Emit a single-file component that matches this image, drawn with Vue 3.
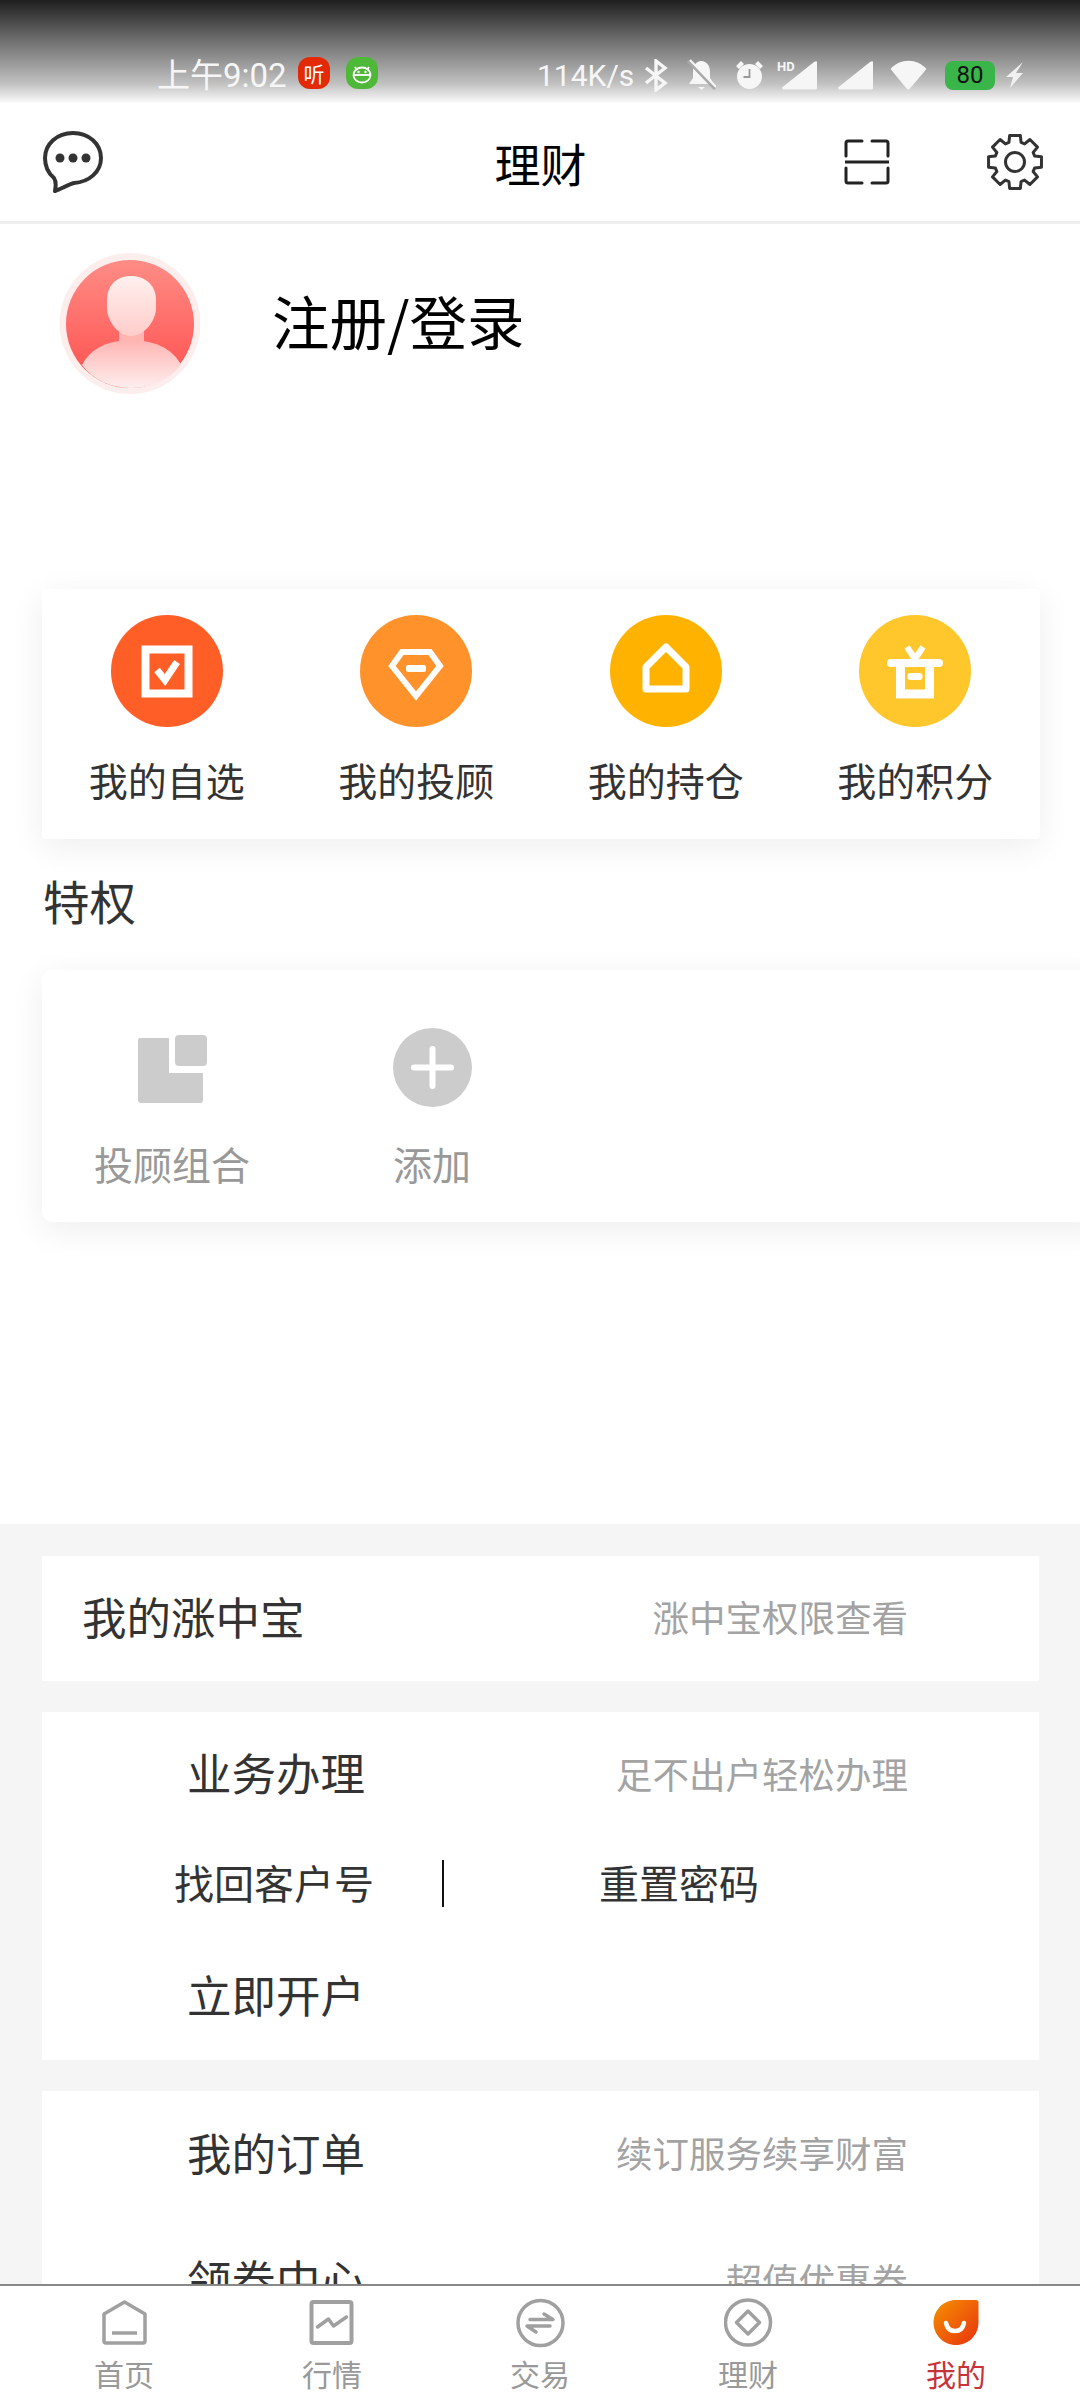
<script setup>
const quick = [
  { label: '我的自选', color: '#ff5e27', icon: 'check' },
  { label: '我的投顾', color: '#ff922b', icon: 'gem' },
  { label: '我的持仓', color: '#ffb300', icon: 'house' },
  { label: '我的积分', color: '#ffc72c', icon: 'gift' }
]
const tabs = [
  { label: '首页', icon: 'home' },
  { label: '行情', icon: 'chart' },
  { label: '交易', icon: 'trade' },
  { label: '理财', icon: 'money' },
  { label: '我的', icon: 'me', active: true }
]

// 8齿齿轮轮廓
function gearPath(cx, cy, outer, inner) {
  const pts = []
  for (let i = 0; i < 8; i++) {
    const a = (i * Math.PI) / 4 - Math.PI / 2
    for (const [r, d] of [[inner, -0.3], [outer, -0.2], [outer, 0.2], [inner, 0.3]]) {
      pts.push(`${(cx + r * Math.cos(a + d)).toFixed(2)} ${(cy + r * Math.sin(a + d)).toFixed(2)}`)
    }
  }
  return 'M' + pts.join('L') + 'Z'
}
const gear = gearPath(29, 29, 27, 20.5)
</script>

<template>
  <div class="page">
    <!-- 状态栏 -->
    <div class="status">
      <div class="status-left">
        <span class="time">上午9:02</span>
        <span class="app-badge red">听</span>
        <span class="app-badge green">
          <svg width="24" height="24" viewBox="0 0 24 24" fill="none" stroke="#fff" stroke-width="1.8">
            <path d="M5 6l2 3M19 6l-2 3" />
            <ellipse cx="12" cy="14" rx="8.5" ry="7.5" />
            <path d="M3.5 14h17" />
            <path d="M8.5 11h.01M15.5 11h.01" stroke-width="2.4" stroke-linecap="round" />
          </svg>
        </span>
      </div>
      <div class="status-right">
        <span class="speed">114K/s</span>
        <svg class="s-bt" width="24" height="33" viewBox="0 0 24 33" fill="none" stroke="#f6f6f6" stroke-width="3.4">
          <path d="M2 9l19 15-9 7V2l9 7L2 24" />
        </svg>
        <svg class="s-bell" width="29" height="33" viewBox="0 0 29 33" fill="#f6f6f6">
          <path d="M14 2c6 0 9 5 9 11v6l4 6H2l4-6v-6c0-6 3-11 8-11z" />
          <path d="M11 28h7l-3.500 3z" />
          <path d="M1 2l27 28" stroke="#a9a9a9" stroke-width="3" />
          <path d="M3 1l26 27" stroke="#f6f6f6" stroke-width="2" />
        </svg>
        <svg class="s-clock" width="29" height="30" viewBox="0 0 29 30">
          <circle cx="14.500" cy="16.500" r="12.500" fill="#f6f6f6" />
          <path d="M1 6l5-5 3 3-5 5zM28 6l-5-5-3 3 5 5z" fill="#f6f6f6" />
          <path d="M14.500 9v8h-6" fill="none" stroke="#999" stroke-width="1.800" />
        </svg>
        <span class="s-hd">
          <span class="hd-text">HD</span>
          <svg width="36" height="29" viewBox="0 0 36 29">
            <path d="M35 1v26a1.500 1.500 0 0 1-1.500 1.500H2c-2 0-2.500-1.500-1-2.800L32 1c1.500-1 3-1 3 0z" fill="#f6f6f6" />
          </svg>
        </span>
        <svg class="s-sig" width="36" height="29" viewBox="0 0 36 29">
          <path d="M35 1v26a1.500 1.500 0 0 1-1.500 1.500H2c-2 0-2.500-1.500-1-2.800L32 1c1.500-1 3-1 3 0z" fill="#f6f6f6" />
        </svg>
        <svg class="s-wifi" width="37" height="30" viewBox="0 0 37 30">
          <path d="M0.500 9C10 -2 27 -2 36.500 9L20 28.500c-1 1.300-2.500 1.300-3.500 0z" fill="#f6f6f6" />
        </svg>
        <span class="battery">80</span>
        <svg class="s-bolt" width="19" height="28" viewBox="0 0 19 28">
          <path d="M18 1L1 16h7l-3 11 13-15h-7z" fill="#f0f0f0" />
        </svg>
      </div>
    </div>

    <!-- 顶部栏 -->
    <header class="topbar">
      <svg class="msg" width="60" height="62" viewBox="0 0 60 62" fill="none">
        <path d="M30 2C46 2 58 13 58 27C58 41 46 51 31 52C26 53 18 58 12 60C13 55 13 50 11 47C5 42 2 35 2 27C2 13 14 2 30 2Z" stroke="#333" stroke-width="4" stroke-linejoin="round" />
        <circle cx="17" cy="27" r="4.500" fill="#333" />
        <circle cx="30" cy="27" r="4.500" fill="#333" />
        <circle cx="43" cy="27" r="4.500" fill="#333" />
      </svg>
      <div class="title">理财</div>
      <div class="top-actions">
        <svg width="46" height="46" viewBox="0 0 46 46" fill="none" stroke="#222" stroke-width="3">
          <path d="M2 17V4a2 2 0 0 1 2-2h14M28 2h14a2 2 0 0 1 2 2v13M2 29v13a2 2 0 0 0 2 2h14M28 44h14a2 2 0 0 0 2-2V29" stroke-linecap="round" />
          <path d="M1 23h44" />
        </svg>
        <svg width="58" height="58" viewBox="0 0 58 58" fill="none" stroke="#333" stroke-width="3" stroke-linejoin="round">
          <circle cx="29" cy="29" r="9.500" />
          <path :d="gear" />
        </svg>
      </div>
    </header>

    <main class="content">
      <section class="profile">
        <svg width="141" height="141" viewBox="0 0 141 141">
          <defs>
            <linearGradient id="face" x1="0" y1="0" x2="0" y2="1">
              <stop offset="0" stop-color="#ff8c86" />
              <stop offset="1" stop-color="#ff4f4d" />
            </linearGradient>
            <linearGradient id="head" x1="0" y1="0" x2="0" y2="1">
              <stop offset="0" stop-color="#fff0ee" />
              <stop offset="1" stop-color="#ffcdca" />
            </linearGradient>
            <linearGradient id="body" x1="0" y1="0" x2="0" y2="1">
              <stop offset="0" stop-color="#ffb5b2" />
              <stop offset="1" stop-color="#fdeeee" />
            </linearGradient>
          </defs>
          <circle cx="71" cy="70.500" r="70.500" fill="#fdeeee" />
          <circle cx="71" cy="71" r="64" fill="url(#face)" />
          <path d="M60 76h25v15H60z" fill="#ffb5b2" />
          <path d="M72 23C87 23 97 33 97 47V55C97 68 85 83 72 83C59 83 48 68 48 55V47C48 33 57 23 72 23Z" fill="url(#head)" />
          <path d="M23 112C32 94 52 87 72 87S113 94 122 112C110 127 92 135 72 135S34 127 23 112Z" fill="url(#body)" />
        </svg>
        <div class="login">注册/登录</div>
      </section>

      <section class="quick card">
        <div v-for="item in quick" :key="item.label" class="quick-item">
          <span class="quick-icon" :style="{ background: item.color }">
            <svg width="64" height="64" viewBox="0 0 64 64" fill="none" stroke="#fff" stroke-width="8">
              <template v-if="item.icon === 'check'">
                <rect x="10.500" y="10.500" width="43" height="44" />
                <path d="M22 31l8 10 12-18" stroke-width="7" />
              </template>
              <template v-else-if="item.icon === 'gem'">
                <path d="M18 13h28l10 14-24 30L8 27z" stroke-width="6" />
                <rect x="22" y="26" width="20" height="7" rx="2" fill="#fff" stroke="none" />
              </template>
              <template v-else-if="item.icon === 'house'">
                <path d="M32 8l20 20v22H12V28z" stroke-width="7" stroke-linejoin="round" />
              </template>
              <template v-else>
                <path d="M24 8l8 12 8-12" stroke-width="6" />
                <path d="M8 24h48" stroke-linecap="round" />
                <path d="M17.500 26v29h29V26" stroke-width="9" />
                <rect x="24.500" y="34" width="15" height="7" rx="3" fill="#fff" stroke="none" />
              </template>
            </svg>
          </span>
          <span class="quick-label">{{ item.label }}</span>
        </div>
      </section>

      <h2 class="section-title">特权</h2>

      <section class="perks card">
        <div class="perk perk-first">
          <span class="perk-icon">
            <svg class="folio" width="69" height="68" viewBox="0 0 69 68" fill="#ccc">
              <path d="M2 3h29v35h34v27a3 3 0 0 1-3 3H3a3 3 0 0 1-3-3V5a2 2 0 0 1 2-2z" />
              <rect x="37" y="0" width="32" height="31" rx="4" />
            </svg>
          </span>
          <span class="perk-label">投顾组合</span>
        </div>
        <div class="perk">
          <span class="perk-icon">
            <svg width="79" height="79" viewBox="0 0 79 79">
              <circle cx="39.500" cy="39.500" r="39.500" fill="#ccc" />
              <path d="M21 39.500h37M39.500 21v37" stroke="#fff" stroke-width="6" stroke-linecap="round" />
            </svg>
          </span>
          <span class="perk-label">添加</span>
        </div>
      </section>

      <div class="lower">
        <div class="panel panel-single">
          <span class="row-name">我的涨中宝</span>
          <span class="row-hint">涨中宝权限查看</span>
        </div>

        <div class="panel panel-biz">
          <div class="row row-head">
            <span class="row-name">业务办理</span>
            <span class="row-hint">足不出户轻松办理</span>
          </div>
          <div class="row-links">
            <span class="link first">找回客户号</span>
            <span class="link-sep"></span>
            <span class="link">重置密码</span>
          </div>
          <div class="row row-open">
            <span class="row-name">立即开户</span>
          </div>
        </div>

        <div class="panel panel-order">
          <div class="row row-order">
            <span class="row-name">我的订单</span>
            <span class="row-hint">续订服务续享财富</span>
          </div>
          <div class="row row-order">
            <span class="row-name">领券中心</span>
            <span class="row-hint">超值优惠券</span>
          </div>
        </div>
      </div>
    </main>

    <!-- 底部导航 -->
    <nav class="tabs">
      <div v-for="tab in tabs" :key="tab.label" class="tab" :class="{ active: tab.active }">
        <svg width="49" height="50" viewBox="0 0 49 50" fill="none" stroke="#a0a0a0" stroke-width="3.500" stroke-linejoin="round">
          <template v-if="tab.icon === 'home'">
            <path d="M24.500 4L45 16V43a2 2 0 0 1-2 2H6a2 2 0 0 1-2-2V16z" />
            <path d="M12 35h25" />
          </template>
          <template v-else-if="tab.icon === 'chart'">
            <rect x="3.500" y="4" width="40" height="41" rx="2" stroke-width="4" />
            <path d="M9.500 29l11-8 5 7 13-9" stroke-linecap="round" />
          </template>
          <template v-else-if="tab.icon === 'trade'">
            <circle cx="24.500" cy="25" r="22.500" />
            <path d="M14 21.500h23l-9-5.500M34 28H11l9 6" stroke-linecap="round" />
          </template>
          <template v-else-if="tab.icon === 'money'">
            <circle cx="24" cy="24.500" r="22.500" />
            <path d="M24 13l11.500 11.500L24 36 12.500 24.500z" />
          </template>
          <template v-else>
            <defs>
              <linearGradient id="drop" x1="0" y1="0" x2="1" y2="1">
                <stop offset="0" stop-color="#f59300" />
                <stop offset="1" stop-color="#e8300f" />
              </linearGradient>
            </defs>
            <path d="M24 2H44a2.500 2.500 0 0 1 2.500 2.500V24.500C46.500 37 36.500 47 24 47S1.500 37 1.500 24.500 11.500 2 24 2Z" fill="url(#drop)" stroke="none" />
            <path d="M14 25c1 5 4 8 9 8s8-3 9-8" stroke="#fff" stroke-width="4.500" stroke-linecap="round" />
          </template>
        </svg>
        <span class="tab-label">{{ tab.label }}</span>
      </div>
    </nav>
  </div>
</template>

<style scoped>
.page {
  width: 1080px;
  height: 2400px;
  display: flex;
  flex-direction: column;
  overflow: hidden;
  background: #fff;
  font-family: "Noto Sans CJK SC", "Noto Sans", sans-serif;
  color: #333;
}
.status {
  flex: none;
  height: 103px;
  box-sizing: border-box;
  padding: 56px 56px 0 157px;
  display: flex;
  justify-content: space-between;
  align-items: flex-start;
  background: linear-gradient(#1f1f1f 0, #3a3a3a 14px, #6e6e6e 40px, #979797 62px, #c2c2c2 84px, #ececec 98px, #fff 104px);
}
.status-left,
.status-right {
  display: flex;
  align-items: center;
  height: 38px;
}
.status-left {
  margin-top: -2px;
}
.time {
  font-size: 33px;
  color: #f6f6f6;
  font-family: Roboto, "Noto Sans CJK SC", sans-serif;
  width: 141px;
  white-space: nowrap;
}
.app-badge {
  width: 32px;
  height: 32px;
  border-radius: 12px;
  display: flex;
  align-items: center;
  justify-content: center;
  color: #fff;
  font-size: 21px;
}
.red { background: #e22a06; }
.green { background: #4fb838; margin-left: 16px; }
.speed {
  font-family: Roboto, sans-serif;
  font-size: 30px;
  color: #f6f6f6;
  width: 98px;
}
.s-bt { margin-left: 9px; }
.s-bell { margin-left: 19px; }
.s-clock { margin-left: 19px; }
.s-hd {
  margin-left: 13px;
  width: 41px;
  height: 29px;
  display: flex;
  justify-content: flex-end;
  position: relative;
}
.hd-text {
  position: absolute;
  left: 0;
  top: -1px;
  font-family: Roboto, sans-serif;
  font-size: 13px;
  line-height: 13px;
  font-weight: 700;
  color: #f6f6f6;
}
.s-sig { margin-left: 20px; }
.s-wifi { margin-left: 16px; }
.battery {
  margin-left: 18px;
  width: 50px;
  height: 29px;
  border-radius: 8px;
  background: #3ab54a;
  color: #111;
  font-family: Roboto, sans-serif;
  font-size: 24px;
  line-height: 29px;
  text-align: center;
}
.s-bolt { margin-left: 10px; }

.topbar {
  flex: none;
  height: 121px;
  box-sizing: border-box;
  padding: 0 36px 0 43px;
  border-bottom: 3px solid #eee;
  display: grid;
  grid-template-columns: 1fr auto 1fr;
  align-items: center;
}
.title {
  font-size: 46px;
  color: #000;
  padding-right: 6px;
}
.top-actions {
  display: flex;
  justify-content: flex-end;
  align-items: center;
  gap: 96px;
}

.content {
  flex: 1;
  min-height: 0;
  overflow: hidden;
}
.profile {
  height: 365px;
  box-sizing: border-box;
  padding: 29px 0 0 59px;
  display: flex;
  align-items: flex-start;
}
.login {
  margin: 32px 0 0 72px;
  font-size: 57.500px;
  line-height: 70px;
  color: #000;
}
.card {
  background: #fff;
  box-shadow: 0 8px 34px rgba(0, 0, 0, 0.07);
}
.quick {
  margin: 0 40px 0 42px;
  height: 250px;
  box-sizing: border-box;
  padding-top: 26px;
  display: grid;
  grid-template-columns: repeat(4, 1fr);
  border-radius: 4px;
}
.quick-item {
  display: flex;
  flex-direction: column;
  align-items: center;
}
.quick-icon {
  width: 112px;
  height: 112px;
  border-radius: 50%;
  display: flex;
  align-items: center;
  justify-content: center;
}
.quick-label {
  margin-top: 24px;
  font-size: 39px;
  line-height: 56px;
}
.section-title {
  margin: 31px 0 40px 43px;
  font-size: 46.500px;
  line-height: 60px;
  font-weight: 400;
}
.perks {
  margin: 0 -30px 0 42px;
  height: 252px;
  border-radius: 10px;
  display: flex;
  align-items: flex-start;
  padding-left: 52px;
}
.perk {
  display: flex;
  flex-direction: column;
  align-items: center;
  width: 156px;
  height: 100%;
  margin-left: 104px;
  color: #999;
  white-space: nowrap;
}
.perk-first {
  margin-left: 0;
}
.perk-icon {
  margin-top: 58px;
  height: 79px;
  display: flex;
  align-items: center;
}
.folio {
  margin: 3px 0 0 1px;
}
.perk-label {
  margin-top: 28px;
  font-size: 39px;
  line-height: 56px;
}

.lower {
  margin-top: 302px;
  min-height: 900px;
  box-sizing: border-box;
  padding: 32px 41px 0 42px;
  background: #f5f5f5;
  display: flex;
  flex-direction: column;
  gap: 31px;
}
.panel {
  background: #fff;
}
.panel-single {
  height: 125px;
  box-sizing: border-box;
  padding: 0 131px 0 40px;
  display: flex;
  justify-content: space-between;
  align-items: center;
}
.row-name {
  font-size: 44.500px;
  line-height: 60px;
  color: #333;
  margin-bottom: 6px;
}
.row-hint {
  font-size: 36.500px;
  line-height: 60px;
  color: #a3a3a3;
  margin-bottom: 3px;
}
.panel-biz {
  height: 348px;
}
.row {
  display: flex;
  justify-content: space-between;
  align-items: center;
  box-sizing: border-box;
  padding: 0 131px 0 145px;
}
.row-head {
  height: 126px;
}
.row-links {
  display: flex;
  align-items: center;
  height: 90px;
  font-size: 40px;
  color: #333;
}
.link {
  margin-bottom: 3px;
}
.link.first {
  margin-left: 132px;
}
.link-sep {
  width: 2px;
  height: 47px;
  margin: 0 155px 0 68px;
  background: #111;
}
.row-open {
  height: 132px;
  padding-top: 6px;
}
.row-order {
  height: 127px;
}

.tabs {
  flex: none;
  height: 116px;
  box-sizing: border-box;
  padding: 12px 20px 0;
  border-top: 2px solid #888;
  background: #fff;
  display: grid;
  grid-template-columns: repeat(5, 1fr);
}
.tab {
  display: flex;
  flex-direction: column;
  align-items: center;
  color: #999;
}
.tab-label {
  margin-top: 6px;
  font-size: 30px;
  line-height: 38px;
}
.tab.active .tab-label {
  color: #c8333a;
}
</style>

<style>
html, body {
  margin: 0;
  background: #fff;
}
</style>
